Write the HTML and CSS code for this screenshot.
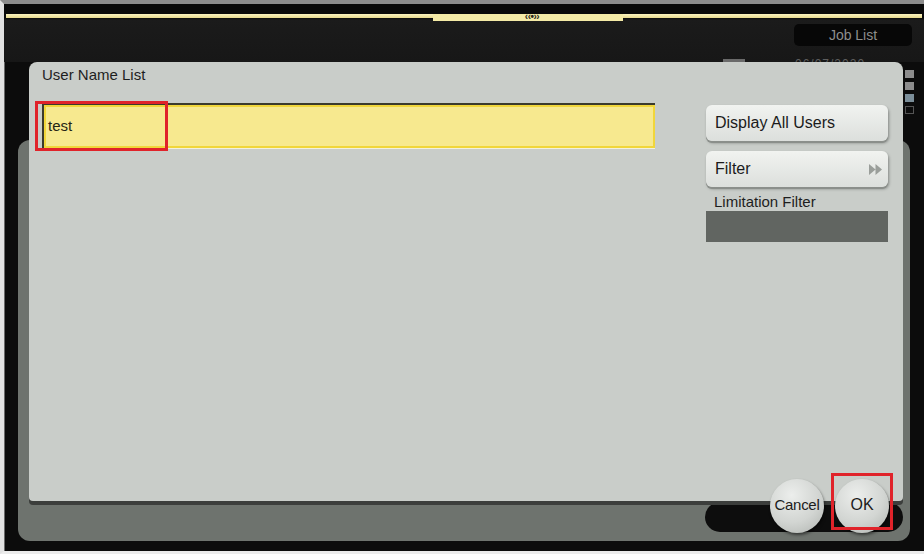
FILE: index.html
```html
<!DOCTYPE html>
<html lang="en">
<head>
    <meta charset="UTF-8">
    <title>User Name List</title>
    <link rel="stylesheet" href="styles.css">
</head>
<body>
    <div class="frame">
        <div class="topbar">
            <div class="rail">
                <div class="rail-line rail-left"></div>
                <div class="rail-tab">‹‹•››</div>
                <div class="rail-line rail-right"></div>
            </div>
            <div class="top-row">
                <div class="job-list">Job List</div>
            </div>
            <div class="date-peek">06/07/2020</div>
            <div class="chip-peek"></div>
        </div>

        <div class="base">
            <div class="pill"></div>
        </div>

        <div class="status">
            <span class="sq"></span>
            <span class="sq"></span>
            <span class="sq blue"></span>
            <span class="sq empty"></span>
        </div>

        <div class="dialog">
            <div class="dialog-title">User Name List</div>
            <div class="dialog-body">
                <div class="field-wrap">
                    <div class="field">test</div>
                    <div class="mark mark-field"></div>
                </div>
                <div class="side">
                    <div class="btn">Display All Users</div>
                    <div class="btn btn-filter">
                        Filter
                        <svg class="ff" width="15" height="13" viewBox="0 0 15 13">
                            <path d="M1 1 L7.5 6.5 L1 12 Z M7.5 1 L14 6.5 L7.5 12 Z" fill="#9a9e9a"/>
                        </svg>
                    </div>
                    <div class="side-label">Limitation Filter</div>
                    <div class="side-box"></div>
                </div>
            </div>
        </div>

        <div class="round round-cancel">Cancel</div>
        <div class="round round-ok">OK</div>
        <div class="mark mark-ok"></div>
    </div>
</body>
</html>
```

FILE: styles.css
```css
* {
    box-sizing: border-box;
}

body {
    margin: 0;
    background: #ffffff;
    font-family: 'Liberation Sans', Arial, sans-serif;
}

.frame {
    width: 924px;
    height: 554px;
    position: relative;
    overflow: hidden;
    background: #0c0c0c;
    border-top: 4px solid #8d8d8d;
    border-left: 4px solid #e2e2e2;
    border-bottom: 3px solid #ececec;
    box-shadow: inset 1px 1px 0 #6a6a6a;
}

/* top strip */
.topbar {
    height: 58px;
    position: relative;
    background: linear-gradient(#0a0a0a 0, #0a0a0a 14px, #1b1b1b 16px, #171717 100%);
}

.rail {
    display: flex;
    align-items: flex-start;
    padding: 10px 2px 0 2px;
}

.rail-line {
    height: 4px;
    background: linear-gradient(#fbf3c0, #e6d98e);
}

.rail-left {
    width: 427px;
}

.rail-right {
    flex: 1;
}

.rail-tab {
    width: 190px;
    height: 7px;
    background: #f4eaa6;
    color: #2a2a20;
    font-size: 10px;
    font-weight: bold;
    line-height: 6px;
    text-align: center;
    padding-left: 8px;
    letter-spacing: -0.5px;
}

.top-row {
    display: flex;
    justify-content: flex-end;
    padding: 3px 12px 0 0;
}

.job-list {
    width: 118px;
    height: 22px;
    border-radius: 5px;
    background: #070707;
    color: #8e8e8e;
    font-size: 14px;
    line-height: 22px;
    text-align: center;
}

.date-peek {
    position: absolute;
    left: 791px;
    top: 53px;
    color: #5e5e5e;
    font-size: 12px;
    letter-spacing: 1px;
}

.chip-peek {
    position: absolute;
    left: 719px;
    top: 55px;
    width: 22px;
    height: 5px;
    background: #6a6a6a;
}

/* grey panel under the dialog */
.base {
    margin: 78px 14px 0 14px;
    height: 401px;
    border-radius: 12px;
    background: #6e736e;
    display: flex;
    flex-direction: column;
    justify-content: flex-end;
    align-items: flex-end;
    padding: 0 7px 9px 0;
}

.pill {
    width: 198px;
    height: 30px;
    border-radius: 15px;
    background: #0d0d0d;
}

.status {
    position: absolute;
    left: 901px;
    top: 66px;
    display: flex;
    flex-direction: column;
    gap: 4px;
}

.sq {
    width: 9px;
    height: 8px;
    background: #8c8c8c;
}

.sq.blue {
    background: #7b8e99;
}

.sq.empty {
    background: transparent;
    border: 1px solid #555;
}

/* dialog */
.dialog {
    position: absolute;
    left: 25px;
    top: 58px;
    width: 874px;
    height: 439px;
    background: #c9cdc9;
    border-radius: 8px 8px 4px 4px;
    box-shadow: 0 4px 0 #3c3e3c;
    padding: 4px 15px 0 13px;
}

.dialog-title {
    height: 18px;
    font-size: 15px;
    line-height: 18px;
    color: #1e1e1e;
}

.dialog-body {
    margin-top: 19px;
    display: grid;
    grid-template-columns: 613px 182px;
    column-gap: 51px;
    align-items: start;
}

.field-wrap {
    position: relative;
}

.field {
    height: 45px;
    background: #f7e98f;
    border-top: 2px solid #3b3a2c;
    border-left: 2px solid #3b3a2c;
    box-shadow: inset 0 0 0 2px #f1d63a, 0 1px 0 #f3f1dc;
    padding-left: 4px;
    font-size: 15px;
    line-height: 41px;
    color: #252515;
}

.side {
    padding-top: 2px;
}

.btn {
    height: 36px;
    border-radius: 6px;
    background: linear-gradient(#f1f3f0, #dcdfdc);
    box-shadow: 0 2px 0 #8b8f8b, 1px 2px 3px rgba(0, 0, 0, 0.35);
    padding-left: 9px;
    font-size: 16px;
    line-height: 36px;
    color: #1b1b1b;
    margin-bottom: 10px;
}

.btn-filter {
    display: flex;
    justify-content: space-between;
    align-items: center;
    padding-right: 5px;
    margin-bottom: 0;
}

.side-label {
    margin-top: 5px;
    height: 19px;
    padding-left: 8px;
    font-size: 15px;
    line-height: 19px;
    color: #1e1e1e;
}

.side-box {
    height: 31px;
    background: #616561;
}

/* round buttons */
.round {
    position: absolute;
    top: 475px;
    width: 54px;
    height: 54px;
    border-radius: 50%;
    background: radial-gradient(circle at 40% 30%, #eceeec 0%, #d2d5d2 55%, #aeb2ae 100%);
    box-shadow: 1px 2px 3px rgba(0, 0, 0, 0.5);
    color: #1c1c1c;
    font-size: 15px;
    line-height: 52px;
    text-align: center;
}

.round-cancel {
    left: 766px;
    letter-spacing: -0.3px;
}

.round-ok {
    left: 831px;
    font-size: 16px;
}

/* red highlight boxes */
.mark {
    position: absolute;
    border: 3px solid #e0232a;
}

.mark-field {
    left: -7px;
    top: -2px;
    width: 133px;
    height: 50px;
}

.mark-ok {
    left: 827px;
    top: 469px;
    width: 62px;
    height: 57px;
}
```
